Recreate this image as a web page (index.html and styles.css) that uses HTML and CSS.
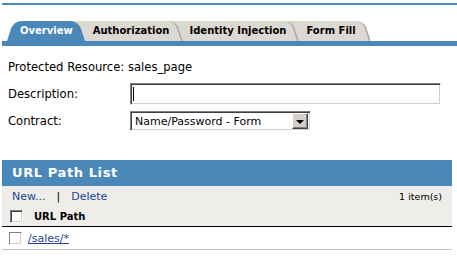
FILE: index.html
```html
<!DOCTYPE html>
<html lang="en">
<head>
    <meta charset="UTF-8">
    <title>Protected Resource - sales_page</title>
    <link rel="stylesheet" href="styles.css">
</head>
<body>
    <div class="topline"></div>
    <div class="tabs">
        <div class="tab active">Overview</div>
        <div class="tab">Authorization</div>
        <div class="tab">Identity Injection</div>
        <div class="tab">Form Fill</div>
    </div>
    <div class="tabbar"></div>

    <div class="form">
        <div class="resource">Protected Resource: sales_page</div>
        <div class="field desc">
            <label>Description:</label>
            <div class="input"><span class="caret"></span></div>
        </div>
        <div class="field contract">
            <label>Contract:</label>
            <div class="select">
                <span class="value">Name/Password - Form</span>
                <span class="arrow"></span>
            </div>
        </div>
    </div>

    <div class="list">
        <div class="list-head">URL Path List</div>
        <div class="toolbar">
            <div class="actions">
                <a href="#">New...</a>
                <span class="sep">|</span>
                <a href="#">Delete</a>
                <span class="count">1 item(s)</span>
            </div>
            <div class="col-head">
                <span class="check"></span>
                <span class="col-title">URL Path</span>
            </div>
        </div>
        <div class="row">
            <span class="check light"></span>
            <a href="#" class="path">/sales/*</a>
        </div>
    </div>
</body>
</html>
```

FILE: styles.css
```css
body {
    margin: 0;
    font-family: "DejaVu Sans", Verdana, sans-serif;
    font-size: 11px;
    color: #000;
}
a {
    color: #22449a;
    text-decoration: none;
}
.topline {
    margin: 3px 0 0 2px;
    height: 2px;
    background-color: #4a88ba;
}

/* tabs */
.tabs {
    display: flex;
    margin-top: 16px;
    padding-left: 7px;
    height: 20px;
}
.tab {
    position: relative;
    font-weight: bold;
    font-size: 10px;
    line-height: 20px;
    padding: 0 13px;
    white-space: nowrap;
}
.tab + .tab {
    margin-left: -6px;
}
.tab:nth-child(1) { z-index: 4; }
.tab:nth-child(2) { z-index: 3; }
.tab:nth-child(3) { z-index: 2; }
.tab:nth-child(4) { z-index: 1; padding-right: 16px; }
.tab::before {
    content: "";
    position: absolute;
    top: 0;
    bottom: 0;
    left: 0;
    right: 0;
    z-index: -1;
    background-color: #dcd9d3;
    border-right: 2px solid #aeaca6;
    border-top-right-radius: 8px;
    transform: skewX(18deg);
    transform-origin: bottom;
}
.tab.active {
    color: #fff;
}
.tab.active::before {
    left: 50%;
    background-color: #4a88ba;
    border-right: none;
}
.tab.active::after {
    content: "";
    position: absolute;
    top: 0;
    bottom: 0;
    left: 0;
    right: 50%;
    z-index: -1;
    background-color: #4a88ba;
    border-top-left-radius: 8px;
    transform: skewX(-18deg);
    transform-origin: bottom;
}
.tabbar {
    height: 5px;
    margin-left: 2px;
    background-color: #4a88ba;
}

/* form */
.form {
    padding: 13px 8px 0;
    font-size: 11.6px;
}
.resource {
    line-height: 16px;
}
.field {
    display: flex;
    align-items: center;
}
.field label {
    width: 122px;
}
.field.desc {
    margin-top: 8px;
}
.field.contract {
    margin-top: 6px;
}
.input, .select {
    box-sizing: border-box;
    background: #fff;
    border: 1px solid;
    border-color: #808080 #fff #fff #808080;
    box-shadow: inset 1px 1px #404040, inset -1px -1px #d4d0c8;
}
.input {
    width: 311px;
    height: 22px;
    padding: 3px 2px;
}
.caret {
    display: block;
    width: 1px;
    height: 14px;
    background: #000;
}
.select {
    width: 181px;
    height: 20px;
    display: flex;
    align-items: center;
    padding: 2px 2px 2px 4px;
    font-size: 11px;
}
.select .value {
    flex: 1;
}
.arrow {
    box-sizing: border-box;
    width: 16px;
    height: 16px;
    background: #d4d0c8;
    border: 1px solid;
    border-color: #fff #404040 #404040 #fff;
    box-shadow: inset -1px -1px #808080;
    display: flex;
    align-items: center;
    justify-content: center;
}
.arrow::after {
    content: "";
    border-left: 4px solid transparent;
    border-right: 4px solid transparent;
    border-top: 4px solid #000;
    margin-top: 1px;
}

/* url path list */
.list {
    margin: 29px 5px 0 2px;
}
.list-head {
    height: 26px;
    line-height: 26px;
    padding-left: 10px;
    background-color: #4a88ba;
    color: #fff;
    font-weight: bold;
    font-size: 13px;
    letter-spacing: 0.6px;
}
.toolbar {
    background-color: #eeede9;
    border-bottom: 1px solid #000;
}
.actions {
    display: flex;
    align-items: center;
    height: 20px;
    padding: 0 10px;
}
.sep {
    margin: 0 11px;
}
.count {
    margin-left: auto;
    font-size: 9.5px;
}
.col-head {
    display: flex;
    align-items: center;
    height: 20px;
    padding-left: 8px;
    font-weight: bold;
    font-size: 10px;
}
.col-title {
    margin-left: 11px;
}
.check {
    box-sizing: border-box;
    width: 13px;
    height: 13px;
    background: #fff;
    border: 1px solid;
    border-color: #808080 #fff #fff #808080;
    box-shadow: inset 1px 1px #404040, inset -1px -1px #d4d0c8;
}
.check.light {
    box-shadow: inset -1px -1px #d4d0c8;
}
.row {
    display: flex;
    align-items: center;
    height: 22px;
    padding-left: 7px;
    border-bottom: 1px solid #c0c0c0;
}
.path {
    margin-left: 6px;
    text-decoration: underline;
}
```
